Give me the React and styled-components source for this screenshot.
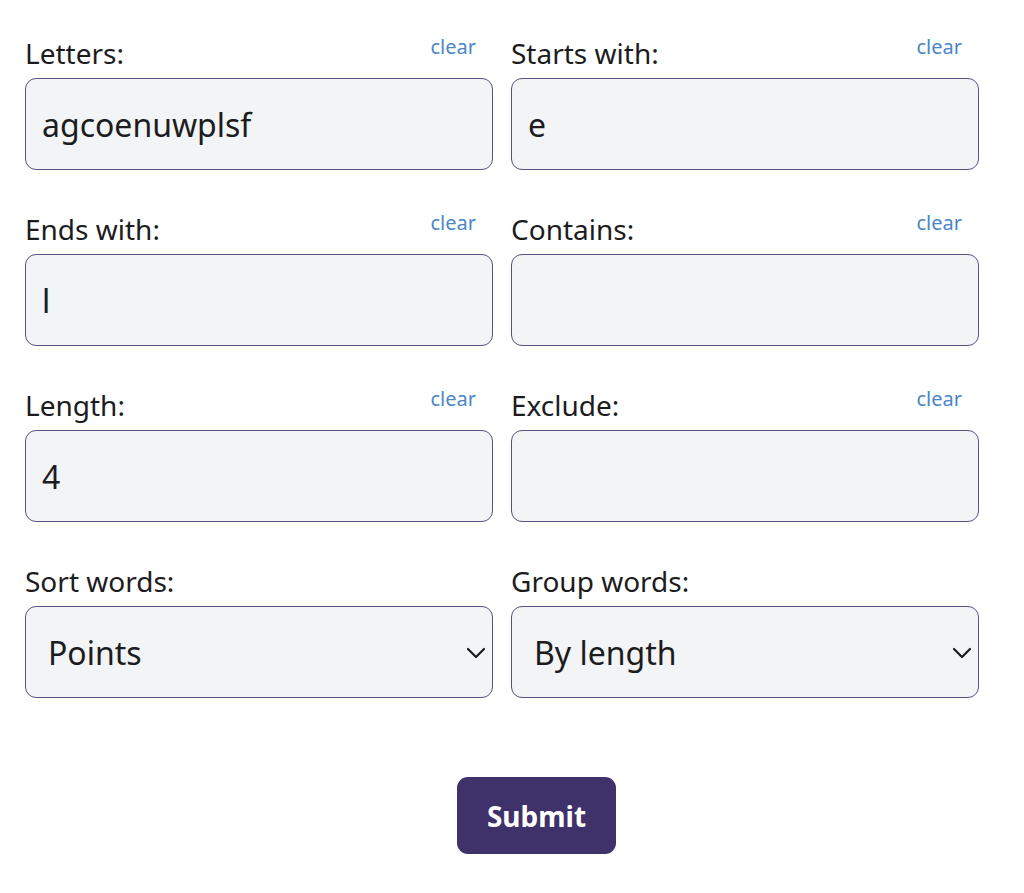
import React from 'react';
import styled, { createGlobalStyle } from 'styled-components';

const GlobalStyle = createGlobalStyle`
  body {
    margin: 0;
    background: #ffffff;
    font-family: "Noto Sans", "Open Sans", sans-serif;
    color: #1c1c1e;
  }
`;

const fields = [
  { name: 'letters', label: 'Letters:', value: 'agcoenuwplsf' },
  { name: 'starts', label: 'Starts with:', value: 'e' },
  { name: 'ends', label: 'Ends with:', value: 'l' },
  { name: 'contains', label: 'Contains:', value: '' },
  { name: 'length', label: 'Length:', value: '4' },
  { name: 'exclude', label: 'Exclude:', value: '' },
];

const selects = [
  { name: 'sort', label: 'Sort words:', value: 'Points', options: ['Points', 'Alphabetical', 'Length'] },
  { name: 'group', label: 'Group words:', value: 'By length', options: ['By length', 'None'] },
];

function Chevron() {
  return (
    <ChevronIcon width="20" height="12" viewBox="0 0 20 12" fill="none">
      <path d="M2 2l8 8 8-8" stroke="#1c1c1e" strokeWidth="2.2" strokeLinecap="round" strokeLinejoin="round" />
    </ChevronIcon>
  );
}

export default function App() {
  return (
    <>
      <GlobalStyle />
      <Form onSubmit={(e) => e.preventDefault()}>
        <Grid>
          {fields.map((f) => (
            <Field key={f.name}>
              <FieldHeader>
                <Label htmlFor={f.name}>{f.label}</Label>
                <Clear type="button">clear</Clear>
              </FieldHeader>
              <TextInput id={f.name} defaultValue={f.value} />
            </Field>
          ))}
          {selects.map((s) => (
            <Field key={s.name}>
              <FieldHeader>
                <Label htmlFor={s.name}>{s.label}</Label>
              </FieldHeader>
              <SelectWrap>
                <Select id={s.name} defaultValue={s.value}>
                  {s.options.map((o) => (
                    <option key={o}>{o}</option>
                  ))}
                </Select>
                <Chevron />
              </SelectWrap>
            </Field>
          ))}
        </Grid>
        <ButtonRow>
          <SubmitButton type="submit">Submit</SubmitButton>
        </ButtonRow>
      </Form>
    </>
  );
}

const Form = styled.form`
  width: 954px;
  padding: 35px 0 0 25px;
`;

const Grid = styled.div`
  display: grid;
  grid-template-columns: 1fr 1fr;
  column-gap: 18px;
  row-gap: 41px;
`;

const Field = styled.div`
  display: flex;
  flex-direction: column;
`;

const FieldHeader = styled.div`
  display: flex;
  justify-content: space-between;
  align-items: flex-start;
  margin-bottom: 7px;
`;

const Label = styled.label`
  font-size: 28px;
  line-height: 36px;
  color: #1c1c1e;
`;

const Clear = styled.button`
  border: none;
  background: none;
  padding: 0 17px 0 0;
  font-family: inherit;
  font-size: 20px;
  line-height: 24px;
  color: #4a86c8;
  cursor: pointer;
`;

const boxStyles = `
  box-sizing: border-box;
  width: 100%;
  height: 92px;
  border: 1px solid #5b5086;
  border-radius: 11px;
  background: #f3f4f6;
  font-family: "Noto Sans", "Open Sans", sans-serif;
  font-size: 32px;
  color: #1c1c1e;
  outline: none;
`;

const TextInput = styled.input`
  ${boxStyles}
  padding: 0 16px;
`;

const SelectWrap = styled.div`
  position: relative;
`;

const Select = styled.select`
  ${boxStyles}
  appearance: none;
  -webkit-appearance: none;
  padding: 0 50px 0 22px;
`;

const ChevronIcon = styled.svg`
  position: absolute;
  right: 7px;
  top: 41px;
  pointer-events: none;
`;

const ButtonRow = styled.div`
  display: flex;
  justify-content: center;
  padding: 79px 0 0 69px;
`;

const SubmitButton = styled.button`
  width: 159px;
  height: 77px;
  border: none;
  border-radius: 11px;
  background: #3f3169;
  color: #ffffff;
  font-family: "Noto Sans", "Open Sans", sans-serif;
  font-weight: 700;
  font-size: 28px;
  cursor: pointer;
`;
